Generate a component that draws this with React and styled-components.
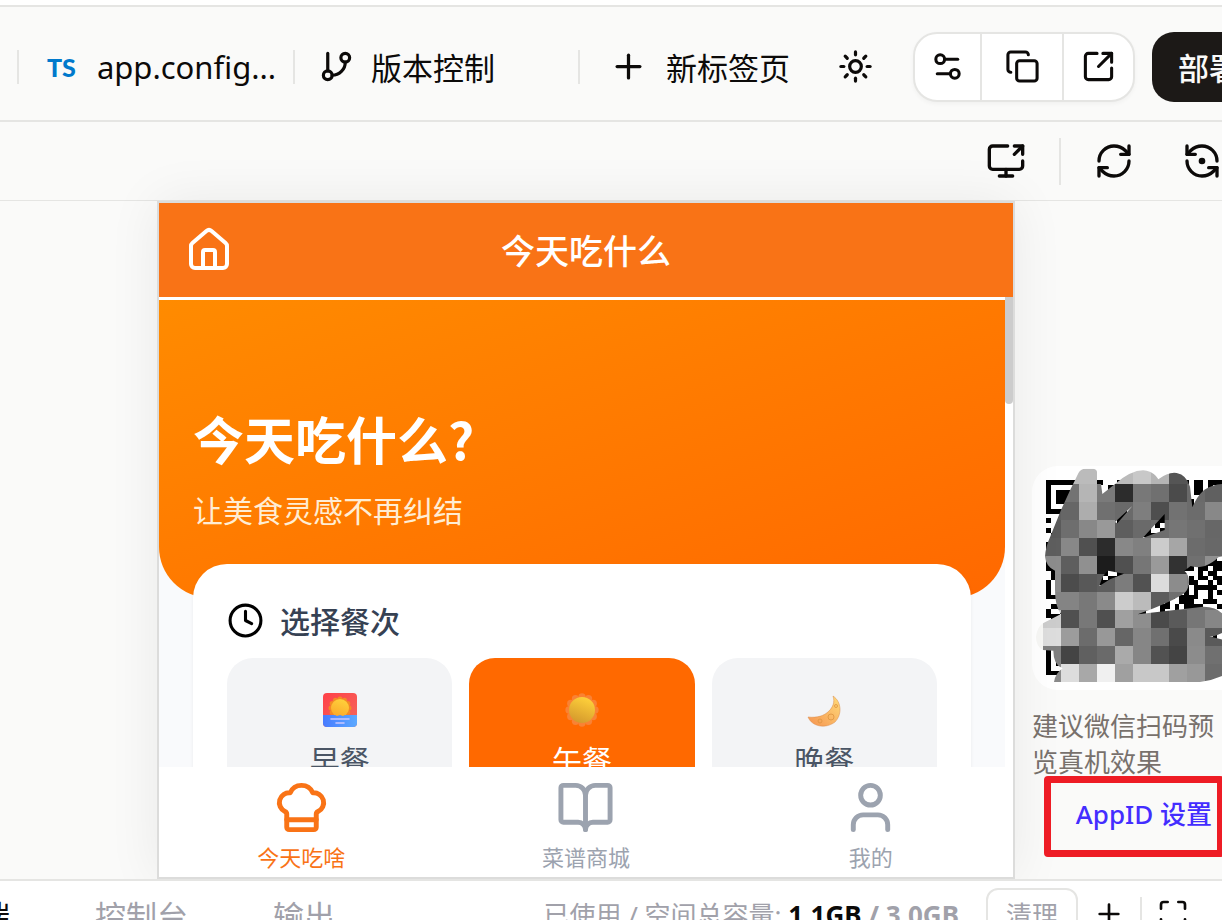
import React from "react";
import styled, { createGlobalStyle } from "styled-components";
import {
  BookOpen,
  ChefHat,
  Clock,
  Copy,
  GitBranch,
  House,
  Maximize,
  Plus,
  RefreshCw,
  ScreenShare,
  Settings2,
  SquareArrowOutUpRight,
  Sun,
  User
} from "lucide-react";

const colors = {
  ink: "#0c0a09",
  line: "#e5e5e3",
  surface: "#fafaf9",
  muted: "#a1a1aa",
  stone: "#78716c",
  link: "#432dff",
  brand: "#f97316",
  active: "#ff6900",
  tab: "#9ca3af",
  mark: "#ee1c25"
};

const meals = [
  { id: "breakfast", label: "早餐", art: "sunrise" },
  { id: "lunch", label: "午餐", art: "sun" },
  { id: "dinner", label: "晚餐", art: "moon" }
];

const tabs = [
  { label: "今天吃啥", icon: ChefHat, active: true },
  { label: "菜谱商城", icon: BookOpen },
  { label: "我的", icon: User }
];

// One row per band of censor blocks, two hex digits per block
const mosaic = [
  "bbbbbbaabbc8b5555555",
  "7373b57a2c78704b6a60",
  "6066ad706a7e4e726c88",
  "5a6e88995e6a6e767067",
  "5e88502c8880cca66c68",
  "8c5e901c50769a327090",
  "8a4c585e7c52dc8c8080",
  "8484788accbb5c707070",
  "cc507850a08e4a5a7686",
  "dd9c6c986686704a8a5a",
  "8044606aaa8652448c70",
  "8adda8f0a0c8c8a0986c"
];

const SCRIBBLE =
  "M235 70Q240 56 258 56H280Q291 58 291 66V102H303L307 132L345 102Q400 55 440 62Q465 68 475 88Q505 65 530 69Q560 75 570 110L577 172Q590 140 612 120Q640 103 670 102H768V300L655 322Q640 338 615 348Q590 355 572 348L553 362Q568 375 567 400Q565 425 545 435Q500 462 413 493L610 470Q650 470 668 492L700 530Q655 558 628 560Q650 562 700 580V660Q650 690 600 696H162Q166 670 188 655Q160 645 160 602L129 600Q108 590 108 560Q112 530 129 520L183 492Q165 470 165 420V362Q138 350 135 320Q137 290 150 262L183 180Q210 120 235 70Z" +
  "M345 216L397 168L352 220ZM428 264L494 192V240L460 252ZM298 408Q310 368 325 362L372 371L330 388Z";

const SIZE = 41;
const CELL = 14;

const inFinder = (x, y) => (x < 8 && (y < 8 || y > SIZE - 9)) || (x > SIZE - 9 && y < 8);

const modules = [];
for (let y = 0; y < SIZE; y += 1) {
  for (let x = 0; x < SIZE; x += 1) {
    let n = Math.imul(x * 73 + y * 151 + 7, 2654435761);
    n = Math.imul(n ^ (n >>> 15), 2246822519) >>> 0;
    if (!inFinder(x, y) && n % 100 < 56) {
      modules.push(`M${x * CELL} ${y * CELL}h${CELL}v${CELL}h-${CELL}z`);
    }
  }
}

const Finder = ({ x, y }) => (
  <g transform={`translate(${x} ${y})`}>
    <path d="M7 7H91V91H7Z" fill="none" stroke="#000" strokeWidth="14" />
    <path d="M28 28H70V70H28Z" />
  </g>
);

const QrCode = () => (
  <QrCard viewBox="96 48 672 672" role="img" aria-label="预览二维码">
    <defs>
      <clipPath id="scribble">
        <path d={SCRIBBLE} clipRule="evenodd" />
      </clipPath>
    </defs>
    <g transform="translate(138 91) scale(1.02)" shapeRendering="crispEdges">
      <path d={modules.join("")} />
      <Finder x={0} y={0} />
      <Finder x={34 * CELL} y={0} />
      <Finder x={0} y={34 * CELL} />
    </g>
    <g clipPath="url(#scribble)" shapeRendering="crispEdges">
      <path d="M100 500H129V620H100Z" fill="#f7f7f5" />
      {mosaic.map((row, y) =>
        row.match(/../g).map((shade, x) => (
          <rect
            key={`${x}-${y}`}
            x={129 + x * 54}
            y={48 + y * 54}
            width={x === 9 ? 110 : 54}
            height="54"
            fill={`#${shade}${shade}${shade}`}
          />
        ))
      )}
    </g>
  </QrCard>
);

const petals = Array.from({ length: 12 }, (_, i) => (i * Math.PI) / 6);

const SunShape = ({ cx, cy, r, ray }) => (
  <g>
    {petals.map(a => (
      <circle key={a} cx={cx + Math.cos(a) * r} cy={cy + Math.sin(a) * r} r={r * 0.28} fill={ray} />
    ))}
    <circle cx={cx} cy={cy} r={r} fill={`url(#fill-${ray.slice(1)})`} />
  </g>
);

const MealArt = ({ kind }) => (
  <svg width="34" height="34" viewBox="0 0 34 34" aria-hidden="true">
    <defs>
      <linearGradient id="fill-f48a25" x1="0.7" y1="0" x2="0.3" y2="1">
        <stop offset="0" stopColor="#ffd23b" />
        <stop offset="1" stopColor="#fba82b" />
      </linearGradient>
      <linearGradient id="fill-f98234" x1="0.7" y1="0" x2="0.3" y2="1">
        <stop offset="0" stopColor="#ffd23b" />
        <stop offset="1" stopColor="#d4982c" />
      </linearGradient>
      <linearGradient id="sky" x1="0" y1="0" x2="1" y2="1">
        <stop offset="0" stopColor="#ff4048" />
        <stop offset="1" stopColor="#f4695c" />
      </linearGradient>
      <linearGradient id="sea">
        <stop offset="0" stopColor="#477bff" />
        <stop offset="1" stopColor="#5ba9ff" />
      </linearGradient>
      <linearGradient id="moonFill" x1="1" y1="0" x2="0" y2="1">
        <stop offset="0" stopColor="#ffdc7a" />
        <stop offset="1" stopColor="#f59350" />
      </linearGradient>
      <clipPath id="frame">
        <rect width="34" height="34" rx="4" />
      </clipPath>
    </defs>
    {kind === "sunrise" && (
      <g clipPath="url(#frame)">
        <rect width="34" height="34" fill="url(#sky)" />
        <SunShape cx={17} cy={15} r={9} ray="#f48a25" />
        <path d="M0 22H12L14 23L17 22L20 23L22 22H34V34H0Z" fill="url(#sea)" />
        <path d="M8 26H26M13 30H21" stroke="#c9c6ff" strokeWidth="1.6" strokeLinecap="round" />
      </g>
    )}
    {kind === "sun" && <SunShape cx={17} cy={17} r={13} ray="#f98234" />}
    {kind === "moon" && (
      <g>
        <path
          d="M26 3C35 9 35 22 28 29C19 36 5 34 1 24C10 25 17 23 22 18C26 14 28 9 26 3Z"
          fill="url(#moonFill)"
          stroke="#d98a4a"
          strokeWidth="0.5"
        />
        <g fill="none" stroke="#dd9440" strokeWidth="0.8">
          <circle cx="24" cy="24" r="3" />
          <circle cx="13" cy="28" r="2" />
          <circle cx="29" cy="13" r="1.5" />
        </g>
      </g>
    )}
  </svg>
);

const RefreshDot = () => (
  <svg
    width="40"
    height="40"
    viewBox="0 0 24 24"
    fill="none"
    stroke="currentColor"
    strokeWidth="2"
    strokeLinecap="round"
    strokeLinejoin="round"
    aria-hidden="true"
  >
    <path d="M21 12a9 9 0 0 0-9-9 9.75 9.75 0 0 0-6.74 2.74L3 8" />
    <path d="M3 3v5h5" />
    <path d="M3 12a9 9 0 0 0 9 9 9.75 9.75 0 0 0 6.74-2.74L21 16" />
    <path d="M16 16h5v5" />
    <circle cx="12" cy="12" r="1" fill="currentColor" />
  </svg>
);

const TopBar = () => (
  <TopBarCtn>
    <OpenTabs>
      <Rule />
      <FileTab type="button">
        <span className="badge">TS</span>
        <span className="name">app.config...</span>
      </FileTab>
      <Rule />
      <TextButton type="button" $left={24} $gap={17}>
        <GitBranch size={35} strokeWidth={2.2} />
        版本控制
      </TextButton>
    </OpenTabs>
    <Rule />
    <TextButton type="button" $left={29} $gap={18}>
      <Plus size={39} strokeWidth={2} />
      新标签页
    </TextButton>
    <ThemeButton type="button" aria-label="切换主题">
      <Sun size={35} strokeWidth={2.2} />
    </ThemeButton>
    <ButtonGroup>
      <GroupButton type="button" $width={65} aria-label="设置">
        <Settings2 size={35} strokeWidth={2.1} />
      </GroupButton>
      <GroupButton type="button" $width={82} aria-label="复制">
        <Copy size={35} strokeWidth={2.1} />
      </GroupButton>
      <GroupButton type="button" $width={71} aria-label="在新窗口打开">
        <SquareArrowOutUpRight size={35} strokeWidth={2.1} />
      </GroupButton>
    </ButtonGroup>
    <DeployButton type="button">部署</DeployButton>
  </TopBarCtn>
);

const Phone = () => (
  <PhoneFrame>
    <PhoneHeader>
      <HomeButton type="button" aria-label="首页">
        <House size={48} strokeWidth={2} />
      </HomeButton>
      <h1>今天吃什么</h1>
    </PhoneHeader>
    <ScrollArea>
      <ScrollContent>
        <Hero>
          <h2>今天吃什么?</h2>
          <p>让美食灵感不再纠结</p>
        </Hero>
        <MealCard>
          <MealTitle>
            <Clock size={37} strokeWidth={2} color="#000" />
            选择餐次
          </MealTitle>
          <MealGrid>
            {meals.map(({ id, label, art }) => (
              <MealButton key={id} type="button" $active={id === "lunch"}>
                <MealArt kind={art} />
                {label}
              </MealButton>
            ))}
          </MealGrid>
        </MealCard>
      </ScrollContent>
      <ScrollTrack>
        <div className="thumb" />
      </ScrollTrack>
    </ScrollArea>
    <TabBar>
      {tabs.map(({ label, icon: TabIcon, active }) => (
        <TabButton key={label} type="button" $active={active}>
          <TabIcon size={59} strokeWidth={2} />
          {label}
        </TabButton>
      ))}
    </TabBar>
  </PhoneFrame>
);

const App = () => (
  <>
    <GlobalStyle />
    <Shell lang="zh-CN">
      <TopBar />
      <PreviewBar>
        <IconButton type="button" aria-label="投屏">
          <ScreenShare size={40} strokeWidth={2} />
        </IconButton>
        <Rule $tall />
        <IconButton type="button" aria-label="刷新">
          <RefreshCw size={40} strokeWidth={2} />
        </IconButton>
        <IconButton type="button" $wide aria-label="重新编译">
          <RefreshDot />
        </IconButton>
      </PreviewBar>
      <Stage>
        <Phone />
        <SidePanel>
          <QrCode />
          <p>建议微信扫码预览真机效果</p>
          <AppIdRow>
            <a href="#appid">AppID 设置</a>
            <Highlight />
          </AppIdRow>
        </SidePanel>
      </Stage>
      <BottomBar>
        <PanelTabs>
          <PanelTab type="button" $active>
            终端
          </PanelTab>
          <PanelTab type="button">控制台</PanelTab>
          <PanelTab type="button">输出</PanelTab>
        </PanelTabs>
        <Usage>
          已使用 / 空间总容量: <b className="used">1.1GB</b> <b>/ 3.0GB</b>
        </Usage>
        <ClearButton type="button">清理</ClearButton>
        <IconButton type="button" aria-label="新建终端">
          <Plus size={32} strokeWidth={2} />
        </IconButton>
        <Rule />
        <IconButton type="button" aria-label="最大化">
          <Maximize size={32} strokeWidth={2} />
        </IconButton>
      </BottomBar>
    </Shell>
  </>
);

export default App;

// Styles
const GlobalStyle = createGlobalStyle`
  * {
    box-sizing: border-box;
  }

  body {
    margin: 0;
    background: white;
    color: ${colors.ink};
    font-family: "Noto Sans", "Noto Sans CJK SC", sans-serif;
  }

  h1, h2, h3, p {
    margin: 0;
  }

  button {
    display: flex;
    align-items: center;
    flex: none;
    padding: 0;
    border: 0;
    background: none;
    color: inherit;
    font: inherit;
    white-space: nowrap;
    cursor: pointer;
  }

  svg {
    display: block;
    flex: none;
  }
`;

const Shell = styled.div`
  display: flex;
  flex-direction: column;
  height: 100vh;
  padding-top: 5px;
  overflow: hidden;
`;

const Rule = styled.span`
  flex: none;
  width: 2px;
  height: ${({ $tall }) => ($tall ? 47 : 34)}px;
  background: ${colors.line};
`;

const TopBarCtn = styled.header`
  display: flex;
  flex: none;
  align-items: center;
  height: 117px;
  padding-top: 6px;
  border-top: 2px solid ${colors.line};
  border-bottom: 2px solid ${colors.line};
  background: ${colors.surface};
`;

const OpenTabs = styled.div`
  display: flex;
  flex: 1 0 auto;
  align-items: center;
  padding: 0 83px 0 17px;
`;

const FileTab = styled.button`
  width: 274px;
  padding-left: 28px;
  gap: 21px;

  & > .badge {
    color: #0079cc;
    font: 900 25px Lato, sans-serif;
  }

  & > .name {
    font-size: 31px;
  }
`;

const TextButton = styled.button`
  gap: ${({ $gap }) => $gap}px;
  padding-left: ${({ $left }) => $left}px;
  font-size: 31px;
`;

const ThemeButton = styled.button`
  padding: 0 40px 0 48px;
`;

const ButtonGroup = styled.div`
  display: flex;
  flex: none;
  height: 70px;
  border: 2px solid ${colors.line};
  border-radius: 24px;
  background: white;
  box-shadow: 0 2px 4px rgba(0, 0, 0, 0.04);
`;

const GroupButton = styled.button`
  justify-content: center;
  width: ${({ $width }) => $width}px;

  & + & {
    border-left: 2px solid ${colors.line};
  }
`;

const DeployButton = styled.button`
  height: 70px;
  margin-left: 17px;
  padding: 0 26px;
  border-radius: 22px;
  background: #1c1917;
  color: ${colors.surface};
  font-size: 31px;
  font-weight: 500;
`;

const PreviewBar = styled.div`
  display: flex;
  flex: none;
  align-items: center;
  justify-content: flex-end;
  height: 79px;
  border-bottom: 1px solid ${colors.line};
  background: ${colors.surface};
`;

const IconButton = styled.button`
  padding: 0 ${({ $wide }) => ($wide ? 0 : 33)}px;
  padding-left: ${({ $wide }) => ($wide ? 15 : 33)}px;
`;

const Stage = styled.main`
  display: flex;
  flex: none;
  padding-left: 157px;
  background: ${colors.surface};
`;

const PhoneFrame = styled.section`
  position: relative;
  flex: 1;
  min-width: 0;
  border: 2px solid #dcdcdb;
  background: white;
  box-shadow: 0 0 50px rgba(0, 0, 0, 0.07);
  font-family: "Noto Sans CJK SC", sans-serif;
`;

const PhoneHeader = styled.header`
  display: grid;
  grid-template-columns: 1fr auto 1fr;
  align-items: center;
  height: 94px;
  padding: 0 26px;
  background: ${colors.brand};
  color: white;

  & > h1 {
    font-size: 34px;
    font-weight: 500;
    line-height: 48px;
  }
`;

const HomeButton = styled.button`
  justify-self: start;
`;

const ScrollArea = styled.div`
  display: flex;
  height: 470px;
  overflow: hidden;
`;

const ScrollContent = styled.div`
  flex: 1;
  height: 100%;
  padding-top: 3px;
  overflow: hidden;
  background: linear-gradient(white 3px, #f9fafc 3px);
`;

const ScrollTrack = styled.div`
  flex: none;
  width: 8px;

  & > .thumb {
    height: 107px;
    border-radius: 0 0 4px 4px;
    background: #cccccc;
  }
`;

const Hero = styled.div`
  height: 298px;
  padding: 102px 34px 0;
  border-radius: 0 0 51px 51px;
  background: linear-gradient(to bottom right, #ff8b00, #ff6800);
  color: white;

  & > h2 {
    font-size: 51px;
    font-weight: 700;
    line-height: 72px;
  }

  & > p {
    margin-top: 15px;
    color: #ffedd4;
    font-size: 30px;
    line-height: 40px;
  }
`;

const MealCard = styled.div`
  position: relative;
  height: 320px;
  margin: -34px 34px 0;
  padding: 34px;
  border-radius: 34px;
  background: white;
  box-shadow: 0 2px 4px rgba(0, 0, 0, 0.06);
`;

const MealTitle = styled.h3`
  display: flex;
  align-items: center;
  gap: 16px;
  height: 44px;
  margin-bottom: 16px;
  color: #364153;
  font-size: 30px;
  font-weight: 500;
`;

const MealGrid = styled.div`
  display: grid;
  grid-template-columns: repeat(3, 1fr);
  gap: 17px;
`;

const MealButton = styled.button`
  flex-direction: column;
  gap: 10px;
  height: 160px;
  padding-top: 35px;
  border-radius: 26px;
  background: ${({ $active }) => ($active ? colors.active : "#f3f4f6")};
  color: ${({ $active }) => ($active ? "white" : "#4a5565")};
  font-size: 30px;
`;

const TabBar = styled.nav`
  display: grid;
  grid-template-columns: repeat(3, 1fr);
  height: 110px;
  background: white;
`;

const TabButton = styled.button`
  flex-direction: column;
  gap: 6px;
  padding-top: 11px;
  color: ${({ $active }) => ($active ? colors.brand : colors.tab)};
  font-size: 22px;
  line-height: 26px;
`;

const SidePanel = styled.aside`
  flex: none;
  width: 207px;
  padding: 265px 0 0 17px;

  & > p {
    margin-top: 18px;
    color: ${colors.stone};
    font-size: 26px;
    line-height: 36px;
  }
`;

const QrCard = styled.svg`
  width: 224px;
  height: 224px;
  border-radius: 26px;
  background: white;
`;

const AppIdRow = styled.div`
  position: relative;
  display: flex;
  justify-content: flex-end;
  padding: 16px 10px 16px 0;

  & > a {
    color: ${colors.link};
    font-size: 26px;
    font-weight: 500;
    line-height: 36px;
    text-decoration: none;
    white-space: nowrap;
  }
`;

// Red marker drawn over the link
const Highlight = styled.span`
  position: absolute;
  inset: -4px -2px -9px 12px;
  border: 7px solid ${colors.mark};
  border-radius: 4px;
  pointer-events: none;
`;

const BottomBar = styled.footer`
  position: relative;
  display: flex;
  flex: none;
  align-items: center;
  height: 68px;
  padding-right: 18px;
  border-top: 2px solid ${colors.line};
  background: white;

  & > ${IconButton} {
    padding: 0 15px;
  }
`;

const PanelTabs = styled.div`
  display: flex;
  flex: 1;
  gap: 85px;
  margin-left: -52px;
`;

const PanelTab = styled.button`
  color: ${({ $active }) => ($active ? colors.ink : colors.muted)};
  font-size: 31px;
`;

const Usage = styled.span`
  flex: none;
  color: ${colors.muted};
  font-size: 26px;

  & > .used {
    color: ${colors.ink};
  }
`;

const ClearButton = styled.button`
  height: 52px;
  margin-left: 27px;
  padding: 0 18px;
  border: 2px solid ${colors.line};
  border-radius: 12px;
  color: ${colors.muted};
  font-size: 26px;
`;
